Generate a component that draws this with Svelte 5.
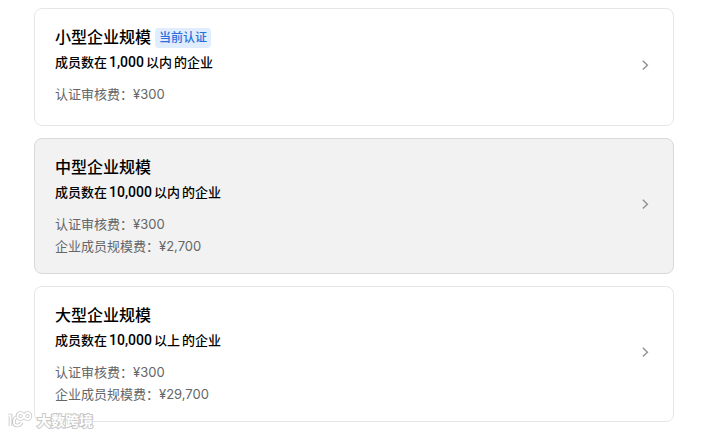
<script>
	const plans = [
		{ name: '小型企业规模', count: '1,000', range: '以内', fees: [['认证审核费', '¥300']] },
		{ name: '中型企业规模', count: '10,000', range: '以内', fees: [['认证审核费', '¥300'], ['企业成员规模费', '¥2,700']] },
		{ name: '大型企业规模', count: '10,000', range: '以上', fees: [['认证审核费', '¥300'], ['企业成员规模费', '¥29,700']] }
	]

	const current = 0
	let selected = $state(1)
</script>

<main>
	{#each plans as plan, i}
		<button type='button' class='card' class:selected={selected === i} onclick={() => selected = i}>
			<span class='content'>
				<span class='title'>
					{plan.name}
					{#if i === current}<span class='badge'>当前认证</span>{/if}
				</span>
				<span class='members'>
					<span>成员数在</span>
					<span class='count'>{plan.count}</span>
					<span>{plan.range}</span>
					<span>的企业</span>
				</span>
				<span class='fees'>
					{#each plan.fees as [label, price]}
						<span class='fee'>{label}：{price}</span>
					{/each}
				</span>
			</span>
			<svg class='arrow' viewBox='0 0 16 16' aria-hidden='true'>
				<path d='M5.8 3.8 L10.4 8.2 L5.8 12.6' />
			</svg>
		</button>
	{/each}
</main>

<div class='watermark'>
	<svg viewBox='0 0 28 18' aria-hidden='true'>
		<g class='outline'>
			<path d='M2.5 4.5 H4.5 V15 M10.5 6 C7 8 7 14.5 11 14.5 C13.5 14.5 15 13.5 15.5 11.5' />
			<circle cx='14.5' cy='5' r='3' />
			<circle cx='21.5' cy='5' r='3' />
		</g>
		<g class='inner'>
			<path d='M2.5 4.5 H4.5 V15 M10.5 6 C7 8 7 14.5 11 14.5 C13.5 14.5 15 13.5 15.5 11.5' />
			<circle cx='14.5' cy='5' r='3' />
			<circle cx='21.5' cy='5' r='3' />
		</g>
	</svg>
	<span>大数跨境</span>
</div>

<style>
	:global(body) {
		background: #fff;
	}

	main {
		display: flex;
		flex-direction: column;
		gap: 12px;
		padding: 8px 44px 12px 34px;
		font-family: Inter, 'Noto Sans CJK SC', sans-serif;
	}

	.card {
		display: flex;
		align-items: center;
		justify-content: space-between;
		min-height: 118px;
		padding: 12px 20px 16px;
		border: 1px solid #e5e6e7;
		border-radius: 8px;
		background: #fff;
		font-family: inherit;
		text-align: left;
		cursor: pointer;

		&.selected {
			border-color: #d8d9da;
			background: #f2f2f2;
		}
	}

	.content {
		align-self: flex-start;
		display: flex;
		flex-direction: column;
	}

	.title {
		display: flex;
		align-items: center;
		gap: 4px;
		font-size: 16px;
		line-height: 32px;
		font-weight: 500;
		color: #000;
	}

	.badge {
		margin-top: 2px;
		padding: 0 4px;
		border-radius: 4px;
		background: #e0ecff;
		font-size: 12px;
		line-height: 20px;
		color: #2a6fdb;
	}

	.members {
		display: flex;
		gap: 2px;
		font-size: 13px;
		line-height: 18px;
		font-weight: 500;
		color: #000;
	}

	.count {
		font-family: Roboto, sans-serif;
		font-size: 14px;
	}

	.fees {
		display: flex;
		flex-direction: column;
		margin-top: 12px;
		font-size: 13px;
		line-height: 22px;
		color: #646668;
	}

	.arrow {
		width: 16px;
		height: 16px;
		fill: none;
		stroke: #8f9193;
		stroke-width: 1.4;
	}

	.watermark {
		position: absolute;
		left: 6px;
		bottom: 4px;
		display: flex;
		align-items: center;
		gap: 3px;
		font-family: 'Noto Sans CJK SC', sans-serif;
		font-size: 14px;
		line-height: 20px;
		font-weight: 700;
		color: #fff;
		-webkit-text-stroke: 2px #c8c8c8;
		paint-order: stroke fill;

		svg {
			width: 28px;
			height: 18px;
			fill: none;
		}
	}

	.outline {
		stroke: #c8c8c8;
		stroke-width: 3.6;
	}

	.inner {
		stroke: #fff;
		stroke-width: 1.8;
	}
</style>
